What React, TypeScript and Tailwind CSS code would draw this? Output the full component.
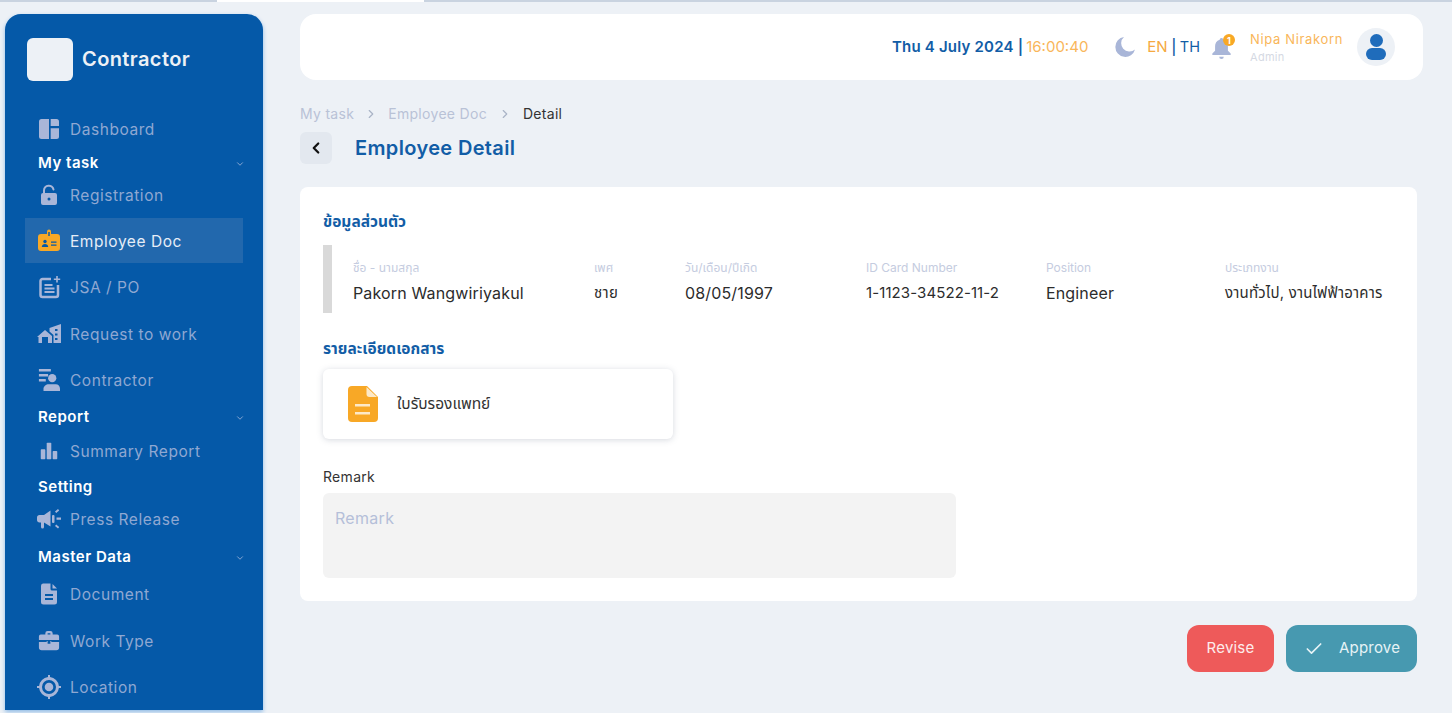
import React from "react";
import { ChevronDown, ChevronRight, ChevronLeft, Check } from "lucide-react";

const ic = "#a9b6d8";
const navy = "#0559a8";

function Ico({ children, size = 22, fill = ic }: { children: React.ReactNode; size?: number; fill?: string }) {
  return (
    <svg width={size} height={size} viewBox="0 0 24 24" fill={fill} className="shrink-0">
      {children}
    </svg>
  );
}

const Dashboard = () => (
  <Ico size={20}><path d="M0 3a3 3 0 0 1 3-3h9v24H3a3 3 0 0 1-3-3Z" /><path d="M14 0h7a3 3 0 0 1 3 3v5.500H14Z" /><path d="M14 11h10v10a3 3 0 0 1-3 3h-7Z" /></Ico>
);
const LockOpen = () => (
  <Ico size={24}>
    <path d="M7 11V7.500a4.800 4.800 0 0 1 9.500-1" fill="none" stroke={ic} strokeWidth="2" strokeLinecap="round" />
    <path fillRule="evenodd" d="M6 10h12a2 2 0 0 1 2 2v8a2 2 0 0 1-2 2H6a2 2 0 0 1-2-2v-8a2 2 0 0 1 2-2Zm6 4.500a1.500 1.500 0 1 0 0 3 1.500 1.500 0 0 0 0-3Z" />
  </Ico>
);
const Badge = () => (
  <Ico size={24} fill="#f8a826">
    <path fillRule="evenodd" d="M10 5V2.500a2 2 0 0 1 4 0V5h6a3 3 0 0 1 3 3v11a3 3 0 0 1-3 3H4a3 3 0 0 1-3-3V8a3 3 0 0 1 3-3Z" />
    <rect x="11.300" y="3" width="1.400" height="4" fill={navy} />
    <circle cx="8" cy="12.500" r="1.700" fill={navy} />
    <path d="M4.800 18c0-2 1.500-3 3.200-3s3.200 1 3.200 3Z" fill={navy} />
    <path d="M14 12.500h5.500v1.300H14Zm0 3h5.500v1.300H14Z" fill={navy} />
  </Ico>
);
const NotePlus = () => (
  <Ico size={24}>
    <path d="M14 4H5.500A2 2 0 0 0 3.500 6V20A2 2 0 0 0 5.500 22H19A2 2 0 0 0 21 20V10" fill="none" stroke={ic} strokeWidth="2.500" />
    <path d="M7.500 9h8v2h-8Zm0 3.500h10v2h-10Zm0 3.500h10v2h-10Z" />
    <path d="M19.200 1h1.600v2.400h2.400V5h-2.400v2.400h-1.600V5h-2.400V3.400h2.400Z" />
  </Ico>
);
const HouseBuilding = () => (
  <Ico size={24}>
    <path d="M0 15 8 8l7 6v7h-4v-6H5v6H1.500v-6Z" />
    <path fillRule="evenodd" d="M12.500 6 24 2v19h-7.500V13l-4-3.500ZM18 7v2h2.500V7Zm0 4.500v2h2.500v-2Zm0 4.500v2h2.500v-2Z" />
  </Ico>
);
const ListUser = () => (
  <Ico size={22}>
    <path d="M1 0h13v2.700H1Zm0 5.500h10v2.700H1Zm0 5.500h7.500v2.700H1Z" />
    <circle cx="15.500" cy="10" r="4.500" />
    <path d="M6 24v-2.500c0-3 3-5 5.500-5h8c2.500 0 4.500 2 4.500 5V24Z" />
  </Ico>
);
const Bars = () => (
  <Ico size={22}><rect x="3" y="10" width="5" height="11" rx="0.800" /><rect x="9.500" y="3" width="5" height="18" rx="0.800" /><rect x="16" y="12" width="5" height="9" rx="0.800" /></Ico>
);
const Megaphone = () => (
  <Ico size={24}>
    <path d="M0 10.500C0 9 1 8 2.500 8H7l6.500-4.500v16L7 15.500v4.500a1.500 1.500 0 0 1-3 0v-4.500H2.500C1 15.500 0 14.500 0 13Z" />
    <path d="M18 4.500 21 2l1.200 1.500-3 2.500Zm1.500 6H24v2.300h-4.500ZM18 19l1.200-1.500 3 2.500-1.200 1.500Z" />
    <rect x="15" y="8" width="2.500" height="8" rx="1" />
  </Ico>
);
const FileIco = () => (
  <Ico size={24}>
    <path fillRule="evenodd" d="M6 1.500h7.500V7A1.500 1.500 0 0 0 15 8.500h5V20a2.500 2.500 0 0 1-2.500 2.500h-11A2.500 2.500 0 0 1 4 20V4a2.500 2.500 0 0 1 2-2.500ZM8 12v2h8v-2Zm0 4v2h8v-2Z" />
    <path d="M15.500 2 20 6.500h-4.500Z" />
  </Ico>
);
const Briefcase = () => (
  <Ico size={22}>
    <path fillRule="evenodd" d="M8 5V3.500A2.500 2.500 0 0 1 10.500 1h3A2.500 2.500 0 0 1 16 3.500V5h5a2 2 0 0 1 2 2v4H1V7a2 2 0 0 1 2-2Zm2.500-1.500V5h3V3.500Z" />
    <path d="M1 13h8.500v-1h5v1H23v6a3 3 0 0 1-3 3H4a3 3 0 0 1-3-3Z" />
    <rect x="10.500" y="12" width="3" height="3" fill={navy} />
  </Ico>
);
const Target = () => (
  <Ico size={24}>
    <path fillRule="evenodd" d="M13 0v2.100A10 10 0 0 1 21.900 11H24v2h-2.100A10 10 0 0 1 13 21.900V24h-2v-2.100A10 10 0 0 1 2.100 13H0v-2h2.100A10 10 0 0 1 11 2.100V0Zm-1 5a7 7 0 1 0 0 14 7 7 0 0 0 0-14Z" />
    <circle cx="12" cy="12" r="4.300" />
  </Ico>
);

function Item({ icon, label, rowClass, active }: { icon: React.ReactNode; label: string; rowClass: string; active?: boolean }) {
  return (
    <div className={`flex items-center ${rowClass} ${active ? "bg-[#2268ad] text-[#e6edf7]" : "text-[#8fa8d2]"}`}>
      <div className="flex w-[45px] shrink-0 justify-center pl-[2px]">{icon}</div>
      <span className="mt-[2px] text-[15.5px] leading-none tracking-[0.55px]">{label}</span>
    </div>
  );
}

function Section({ label, rowClass, chevron }: { label: string; rowClass: string; chevron?: boolean }) {
  return (
    <div className={`flex items-center justify-between pl-[13px] ${rowClass}`}>
      <span className="text-[15px] font-semibold leading-none tracking-[0.5px] text-white">{label}</span>
      {chevron && <ChevronDown size={10} className="-mr-[2px] mt-[3px] text-[#9fb5da]" strokeWidth={2} />}
    </div>
  );
}

function Field({ label, value, valueClass }: { label: string; value: string; valueClass: string }) {
  return (
    <div className="flex flex-col">
      <span className="h-[16px] text-[12px] leading-[16px] text-[#c5cce0]">{label}</span>
      <span className={`mt-[5px] h-[24px] leading-[24px] text-[#2c2c2c] ${valueClass}`}>{value}</span>
    </div>
  );
}

export default function App() {
  return (
    <div className="flex h-[713px] w-[1452px] flex-col overflow-hidden bg-[#edf1f6] font-['Inter','Noto_Sans','Noto_Sans_Thai','Liberation_Sans',sans-serif]">
      <div className="flex h-[2px] shrink-0">
        <div className="w-[217px] bg-[#c9d3e0]" />
        <div className="w-[207px] bg-white" />
        <div className="flex-1 bg-[#c9d3e0]" />
      </div>
      <div className="flex min-h-0 flex-1">
        <aside className="ml-[5px] mt-[12px] h-[696px] w-[258px] shrink-0 rounded-t-[16px] bg-[#0559a8] shadow-[0_2px_4px_#8fbbe6]">
          <div className="flex h-[98px] items-start pl-[22px] pt-[24px]">
            <div className="h-[43px] w-[46px] rounded-[6px] bg-[#edf1f6]" />
            <span className="ml-[9px] mt-[9px] text-[20px] font-semibold leading-[24px] tracking-[0.4px] text-[#edf1f6]">Contractor</span>
          </div>
          <nav className="flex flex-col pl-[20px] pr-[20px]">
            <Item icon={<Dashboard />} label="Dashboard" rowClass="h-[34px]" />
            <Section label="My task" rowClass="h-[32px]" chevron />
            <Item icon={<LockOpen />} label="Registration" rowClass="h-[34px]" />
            <Item icon={<Badge />} label="Employee Doc" rowClass="mt-[6px] h-[45px]" active />
            <Item icon={<NotePlus />} label="JSA / PO" rowClass="h-[48px]" />
            <Item icon={<HouseBuilding />} label="Request to work" rowClass="h-[46px]" />
            <Item icon={<ListUser />} label="Contractor" rowClass="h-[46px]" />
            <Section label="Report" rowClass="h-[26px]" chevron />
            <Item icon={<Bars />} label="Summary Report" rowClass="h-[44px]" />
            <Section label="Setting" rowClass="h-[26px]" />
            <Item icon={<Megaphone />} label="Press Release" rowClass="h-[40px]" />
            <Section label="Master Data" rowClass="h-[34px]" chevron />
            <Item icon={<FileIco />} label="Document" rowClass="h-[42px]" />
            <Item icon={<Briefcase />} label="Work Type" rowClass="h-[52px]" />
            <Item icon={<Target />} label="Location" rowClass="h-[40px]" />
          </nav>
        </aside>

        <main className="ml-[37px] flex min-w-0 flex-1 flex-col pr-[29px] pt-[12px]">
          <header className="flex h-[66px] shrink-0 items-center justify-end rounded-[16px] bg-white pr-[28px]">
            <span className="text-[15px] font-semibold tracking-[0.2px] text-[#125da6]">Thu 4 July 2024 |</span>
            <span className="ml-[3px] text-[15px] text-[#f9b65a]">16:00:40</span>
            <svg width="20" height="20" viewBox="0 0 20 20" className="ml-[27px]" fill="#a9b6d8"><path d="M9 0a8 8 0 0 0 11 12.500A10 10 0 1 1 9 0Z" /></svg>
            <span className="ml-[12px] text-[15px] text-[#f5a93f]">EN</span>
            <span className="mx-[3.500px] text-[15px] font-medium text-[#125da6]">|</span>
            <span className="text-[14.5px] text-[#125da6]">TH</span>
            <div className="relative ml-[11px] flex h-[24px] w-[20px] justify-center">
              <svg width="19" height="22" viewBox="0 0 20 24" fill="#a9b6d8" className="mt-[2px]"><path d="M10 1a2 2 0 0 1 2 2c3.500 1 5 4 5 7v5l3 3v1.500H0V18l3-3v-5c0-3 1.500-6 5-7a2 2 0 0 1 2-2Z" /><path d="M7.500 21.500h5a2.500 2.500 0 0 1-5 0Z" /></svg>
              <span className="absolute right-[-4px] top-[-1px] flex h-[12px] w-[12px] items-center justify-center rounded-full bg-[#f8a826] text-[9px] font-bold leading-none text-white">1</span>
            </div>
            <div className="ml-[19px] flex w-[107px] flex-col">
              <span className="text-[13px] leading-[16px] tracking-[0.65px] text-[#f9b65a]">Nipa Nirakorn</span>
              <span className="mt-[3px] text-[11px] leading-[14px] tracking-[0.3px] text-[#d5d9e3]">Admin</span>
            </div>
            <div className="flex h-[38px] w-[38px] flex-col items-center justify-center rounded-full bg-[#edf1f6]">
              <div className="h-[13px] w-[13px] rounded-full bg-[#1f6cbb]" />
              <div className="mt-[1px] h-[12px] w-[20px] rounded-full bg-[#1f6cbb]" />
            </div>
          </header>

          <nav className="mt-[25px] flex h-[18px] items-center text-[14px] leading-none tracking-[0.3px] text-[#b9c2d6]">
            <span>My task</span>
            <ChevronRight size={14} className="ml-[10px] mr-[10px] text-[#a9b3c6]" />
            <span>Employee Doc</span>
            <ChevronRight size={14} className="mx-[11px] text-[#a9b3c6]" />
            <span className="text-[#333]">Detail</span>
          </nav>

          <div className="mt-[9px] flex h-[32px] items-center">
            <button className="flex h-[32px] w-[32px] items-center justify-center rounded-[6px] bg-[#e3e8ef]">
              <ChevronLeft size={18} strokeWidth={3} className="text-[#111]" />
            </button>
            <h1 className="ml-[23px] text-[20px] font-semibold leading-none tracking-[0.35px] text-[#125da6]">Employee Detail</h1>
          </div>

          <section className="mr-[6px] mt-[23px] h-[414px] shrink-0 rounded-[8px] bg-white pl-[23px] pt-[25px]">
            <h2 className="text-[15.5px] font-bold leading-[20px] text-[#125da6]">ข้อมูลส่วนตัว</h2>
            <div className="mt-[13px] flex h-[68px] border-l-[9px] border-[#d9d9d9] pl-[21px] pt-[15px]">
              <div className="grid flex-1 grid-cols-[241px_91px_181px_180px_179px_1fr]">
                <Field label="ชื่อ - นามสกุล" value="Pakorn Wangwiriyakul" valueClass="text-[16px] tracking-[0.15px]" />
                <Field label="เพศ" value="ชาย" valueClass="text-[15px] tracking-[0.3px]" />
                <Field label="วัน/เดือน/ปีเกิด" value="08/05/1997" valueClass="text-[16px] tracking-[0.15px]" />
                <Field label="ID Card Number" value="1-1123-34522-11-2" valueClass="text-[15px] tracking-[0.1px]" />
                <Field label="Position" value="Engineer" valueClass="text-[16px] tracking-[0.15px]" />
                <Field label="ประเภทงาน" value="งานทั่วไป, งานไฟฟ้าอาคาร" valueClass="text-[15px] tracking-[0.2px]" />
              </div>
            </div>
            <h2 className="mt-[26px] text-[15.5px] font-bold leading-[20px] text-[#125da6]">รายละเอียดเอกสาร</h2>
            <div className="mt-[10px] flex h-[70px] w-[350px] items-center rounded-[6px] bg-white pl-[24px] shadow-[0_1px_6px_rgba(120,130,150,0.3)]">
              <svg width="32" height="38" viewBox="0 0 32 38" className="shrink-0">
                <path d="M5 1h15l11 11v21a4 4 0 0 1-4 4H5a4 4 0 0 1-4-4V5a4 4 0 0 1 4-4Z" fill="#f8a826" />
                <path d="M19.500 2v7a3 3 0 0 0 3 3H30Z" fill="#fde9c8" />
                <rect x="8" y="19" width="15" height="2.500" fill="#fde9c8" />
                <rect x="8" y="27" width="15" height="2.500" fill="#fde9c8" />
              </svg>
              <span className="ml-[18px] text-[15.5px] leading-none text-[#333]">ใบรับรองแพทย์</span>
            </div>
            <label className="mt-[28px] block text-[14px] leading-[20px] tracking-[0.3px] text-[#333]">Remark</label>
            <div className="mt-[6px] h-[85px] w-[633px] rounded-[6px] bg-[#f3f3f3] pl-[12px] pt-[15px] text-[16px] leading-[20px] tracking-[0.3px] text-[#b5bfd9]">Remark</div>
          </section>

          <div className="mr-[6px] mt-[24px] flex justify-end gap-[12px]">
            <button className="h-[47px] w-[87px] rounded-[12px] bg-[#ee5a5a] text-[15px] tracking-[0.2px] text-[#fdecec]">Revise</button>
            <button className="flex h-[47px] w-[131px] items-center rounded-[12px] bg-[#4799b0] pl-[18px] text-[15px] tracking-[0.2px] text-[#e6f3f6]">
              <Check size={20} strokeWidth={2} />
              <span className="ml-[15px]">Approve</span>
            </button>
          </div>
        </main>
      </div>
    </div>
  );
}
